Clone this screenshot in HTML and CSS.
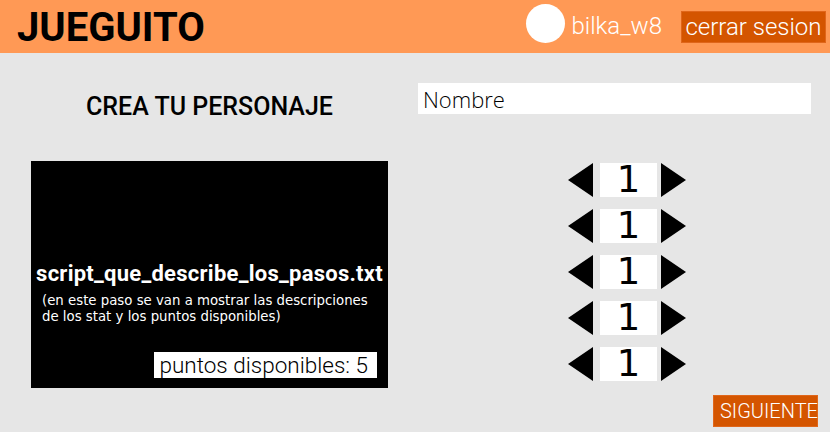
FILE: index.html
```html
<!DOCTYPE html>
<html lang="es">
<head>
<meta charset="utf-8">
<title>Jueguito</title>
<link rel="stylesheet" href="styles.css">
</head>
<body>
<header class="topbar">
  <h1 class="logo">JUEGUITO</h1>
  <div class="user">
    <span class="avatar"></span>
    <span class="username">bilka_w8</span>
    <button class="logout">cerrar sesion</button>
  </div>
</header>
<main class="creator">
  <h2 class="title">CREA TU PERSONAJE</h2>
  <div class="name-field"><span class="placeholder">Nombre</span></div>
  <section class="info">
    <p class="info-title">script_que_describe_los_pasos.txt</p>
    <p class="info-desc">(en este paso se van a mostrar las descripciones de los stat y los puntos disponibles)</p>
    <div class="points">puntos disponibles: 5</div>
  </section>
  <div class="stats">
    <div class="stepper">
      <svg class="arrow" viewBox="0 0 25 34"><polygon points="25,0 25,34 0,17"/></svg>
      <span class="value">1</span>
      <svg class="arrow" viewBox="0 0 25 34"><polygon points="0,0 0,34 25,17"/></svg>
    </div>
    <div class="stepper">
      <svg class="arrow" viewBox="0 0 25 34"><polygon points="25,0 25,34 0,17"/></svg>
      <span class="value">1</span>
      <svg class="arrow" viewBox="0 0 25 34"><polygon points="0,0 0,34 25,17"/></svg>
    </div>
    <div class="stepper">
      <svg class="arrow" viewBox="0 0 25 34"><polygon points="25,0 25,34 0,17"/></svg>
      <span class="value">1</span>
      <svg class="arrow" viewBox="0 0 25 34"><polygon points="0,0 0,34 25,17"/></svg>
    </div>
    <div class="stepper">
      <svg class="arrow" viewBox="0 0 25 34"><polygon points="25,0 25,34 0,17"/></svg>
      <span class="value">1</span>
      <svg class="arrow" viewBox="0 0 25 34"><polygon points="0,0 0,34 25,17"/></svg>
    </div>
    <div class="stepper">
      <svg class="arrow" viewBox="0 0 25 34"><polygon points="25,0 25,34 0,17"/></svg>
      <span class="value">1</span>
      <svg class="arrow" viewBox="0 0 25 34"><polygon points="0,0 0,34 25,17"/></svg>
    </div>
  </div>
</main>
<footer class="actions">
  <button class="next">SIGUIENTE</button>
</footer>
</body>
</html>
```
FILE: styles.css
```css
* { box-sizing: border-box; }
html, body { margin: 0; padding: 0; }
body {
  background: #e6e6e6;
  font-family: Roboto, "Liberation Sans", sans-serif;
  width: 830px;
  height: 432px;
  overflow: hidden;
}
.topbar {
  height: 53px;
  background: #ff9955;
  display: flex;
  justify-content: space-between;
  align-items: flex-start;
  padding: 0 4px 0 17px;
}
.logo {
  margin: 0;
  font-size: 40px;
  font-weight: 700;
  line-height: 53px;
  color: #000;
  padding-top: 1px;
}
.user {
  display: flex;
  align-items: flex-start;
  height: 53px;
}
.avatar {
  width: 39px;
  height: 39px;
  border-radius: 50%;
  background: #fff;
  margin: 4px 6px 0 0;
}
.username {
  color: #fff;
  font-weight: 300;
  font-size: 24px;
  line-height: 28px;
  margin: 12px 19px 0 0;
}
.logout {
  margin-top: 11px;
  font-family: Roboto, sans-serif;
  font-weight: 300;
  font-size: 24px;
  color: #fff;
  background: #d45500;
  border: 1px solid #e0661a;
  height: 32px;
  width: 145px;
  padding: 0;
  line-height: 28px;
}
.creator {
  display: grid;
  grid-template-columns: 357px 393px;
  grid-template-rows: 31px 227px;
  column-gap: 30px;
  row-gap: 47px;
  padding: 30px 0 0 31px;
}
.title {
  margin: 9px 0 0;
  font-size: 25px;
  font-weight: 500;
  line-height: 29px;
  text-align: center;
  color: #000;
  white-space: nowrap;
}
.name-field {
  background: #fff;
  height: 31px;
  padding: 0 5px;
  display: flex;
  align-items: center;
}
.placeholder {
  font-family: "Open Sans", sans-serif;
  font-weight: 300;
  font-size: 22px;
  color: #000;
}
.info {
  background: #000;
  color: #fff;
  display: flex;
  flex-direction: column;
  padding: 100px 11px 10px 11px;
}
.info-title {
  margin: 0 -11px;
  font-weight: 700;
  font-size: 22px;
  letter-spacing: 0.25px;
  line-height: 25px;
  text-align: center;
  white-space: nowrap;
}
.info-desc {
  margin: 7px -9px 0 0;
  font-family: "DejaVu Sans", sans-serif;
  font-size: 13.3px;
  line-height: 16px;
}
.points {
  margin-top: auto;
  align-self: flex-end;
  background: #fff;
  color: #000;
  font-weight: 300;
  font-size: 22.5px;
  line-height: 26px;
  height: 26px;
  padding: 0 9px 0 6px;
}
.stats {
  display: flex;
  flex-direction: column;
  gap: 12px;
  padding: 2px 0 0 150px;
}
.stepper {
  display: flex;
  align-items: center;
  height: 34px;
}
.arrow {
  width: 25px;
  height: 34px;
  fill: #000;
}
.value {
  width: 57px;
  height: 34px;
  background: #fff;
  margin: 0 4px 0 7px;
  font-family: "DejaVu Sans", sans-serif;
  font-size: 37px;
  line-height: 34px;
  text-align: center;
  color: #000;
}
.actions {
  display: flex;
  justify-content: flex-end;
  padding: 7px 12px 0 0;
}
.next {
  font-family: Roboto, sans-serif;
  font-weight: 300;
  font-size: 20px;
  color: #fff;
  background: #d45500;
  border: 1px solid #e0661a;
  height: 32px;
  width: 105px;
  padding: 0 0 0 6px;
  line-height: 28px;
  text-align: left;
}
```
